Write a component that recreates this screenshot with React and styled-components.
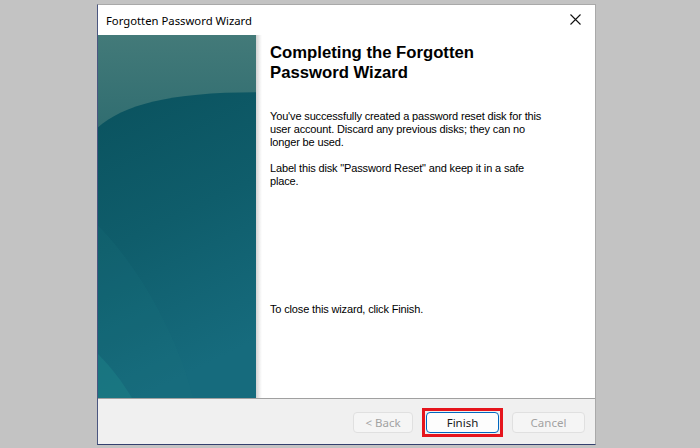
import React from 'react';
import styled, { createGlobalStyle } from 'styled-components';

const GlobalStyle = createGlobalStyle`
  html, body {
    margin: 0;
    padding: 0;
    background: #c3c3c3;
  }
  body {
    font-family: "Liberation Sans", Arial, sans-serif;
  }
`;

const Page = styled.div`
  padding: 4px 0 0 97px;
  height: 448px;
  box-sizing: border-box;
`;

const Dialog = styled.div`
  width: 499px;
  height: 441px;
  box-sizing: border-box;
  display: flex;
  flex-direction: column;
  background: #fff;
  border-top: 1px solid #a9a9a9;
  border-right: 1px solid #a9a9a9;
  border-left: 1px solid #4a5680;
  border-bottom: 1px solid #34406e;
`;

const TitleBar = styled.div`
  height: 30px;
  display: flex;
  align-items: center;
  justify-content: space-between;
  padding: 0 10px 0 8px;
  font-family: "Noto Sans", "Open Sans", sans-serif;
  font-size: 11.3px;
  color: #000;
`;

const CloseButton = styled.button`
  width: 20px;
  height: 20px;
  border: 0;
  padding: 0;
  background: none;
  display: flex;
  align-items: center;
  justify-content: center;
  margin-top: -1px;
`;

const Body = styled.div`
  flex: 1;
  display: flex;
  min-height: 0;
`;

const SidePanel = styled.div`
  width: 158px;
  flex: none;
  overflow: hidden;
  svg {
    display: block;
    width: 100%;
    height: 100%;
  }
`;

const Shade = styled.div`
  width: 6px;
  flex: none;
  background: linear-gradient(to right, #d2d2d2, #f4f4f4 70%, #fff);
`;

const Content = styled.div`
  flex: 1;
  display: flex;
  flex-direction: column;
  padding: 8px 40px 82px 8px;
`;

const Heading = styled.h1`
  margin: 0 0 27px;
  font-family: "Liberation Sans", Arial, sans-serif;
  font-size: 16.7px;
  line-height: 20px;
  font-weight: bold;
  color: #000;
`;

const Text = styled.p`
  margin: 0 0 13px;
  font-size: 11px;
  line-height: 13px;
  letter-spacing: -0.15px;
  color: #000;
  &:last-child {
    margin: auto 0 0;
  }
`;

const Footer = styled.div`
  height: 46px;
  box-sizing: border-box;
  border-top: 1px solid #a0a0a0;
  background: #f0f0f0;
  display: flex;
  align-items: flex-start;
  justify-content: flex-end;
  gap: 9px;
  padding: 9px 10px 0 0;
`;

const Button = styled.button`
  width: ${(p) => p.$width || 73}px;
  height: 21px;
  margin-top: ${(p) => (p.$flush ? 0 : 4)}px;
  box-sizing: border-box;
  border-radius: 4px;
  font-family: "Noto Sans", "Open Sans", sans-serif;
  font-size: 11.5px;
  padding: 0;
  border: 1px solid ${(p) => (p.$primary ? '#0067c0' : '#e0e0e0')};
  background: ${(p) => (p.$primary ? '#fdfdfd' : '#f5f5f5')};
  color: ${(p) => (p.$primary ? '#1a1a1a' : '#a2a2a2')};
`;

const Highlight = styled.div`
  border: 3px solid #e5141c;
  padding: 1px;
  display: flex;
`;

const WizardArt = () => (
  <svg viewBox="0 0 158 362" preserveAspectRatio="none">
    <defs>
      <linearGradient id="sky" x1="0" y1="0" x2="0" y2="1">
        <stop offset="0" stopColor="#437a79" />
        <stop offset="0.3" stopColor="#2d6b6f" />
        <stop offset="1" stopColor="#1f6a72" />
      </linearGradient>
      <linearGradient id="deep" x1="0" y1="0" x2="0.25" y2="1">
        <stop offset="0" stopColor="#0a525e" />
        <stop offset="0.5" stopColor="#0f5d6b" />
        <stop offset="1" stopColor="#166b7d" />
      </linearGradient>
    </defs>
    <rect x="0" y="0" width="158" height="362" fill="url(#sky)" />
    <path d="M0 92 C 25 70, 70 57, 158 57 L158 362 L0 362 Z" fill="url(#deep)" />
    <path d="M0 190 C 40 230, 80 300, 95 362 L0 362 Z" fill="#1a7480" opacity="0.18" />
    <path d="M0 318 C 12 330, 24 345, 34 362 L0 362 Z" fill="#1c7d86" opacity="0.6" />
  </svg>
);

const CloseIcon = () => (
  <svg width="11" height="11" viewBox="0 0 11 11">
    <path d="M0.5 0.5 L10.5 10.5 M10.5 0.5 L0.5 10.5" stroke="#111" strokeWidth="1.1" />
  </svg>
);

export default function App() {
  return (
    <>
      <GlobalStyle />
      <Page>
        <Dialog>
          <TitleBar>
            <span>Forgotten Password Wizard</span>
            <CloseButton aria-label="Close">
              <CloseIcon />
            </CloseButton>
          </TitleBar>
          <Body>
            <SidePanel>
              <WizardArt />
            </SidePanel>
            <Shade />
            <Content>
              <Heading>
                Completing the Forgotten
                <br />
                Password Wizard
              </Heading>
              <Text>
                You've successfully created a password reset disk for this user account. Discard any
                previous disks; they can no longer be used.
              </Text>
              <Text>Label this disk "Password Reset" and keep it in a safe place.</Text>
              <Text>To close this wizard, click Finish.</Text>
            </Content>
          </Body>
          <Footer>
            <Button $width={60} disabled>
              &lt; Back
            </Button>
            <Highlight>
              <Button $primary $flush>
                Finish
              </Button>
            </Highlight>
            <Button disabled>Cancel</Button>
          </Footer>
        </Dialog>
      </Page>
    </>
  );
}
